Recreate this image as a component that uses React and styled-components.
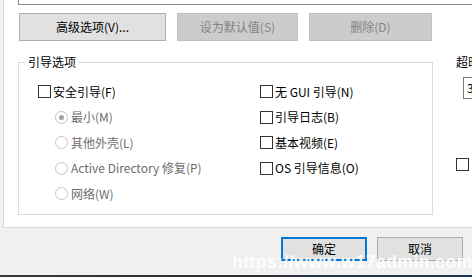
import React from "react";
import styled, { createGlobalStyle } from "styled-components";

const GlobalStyle = createGlobalStyle`
  html, body {
    margin: 0;
    padding: 0;
    background: #f0f0f0;
  }
  body {
    font-family: "Noto Sans CJK SC", "Noto Sans", sans-serif;
    font-size: 12px;
    color: #000;
  }
`;

const Window = styled.div`
  position: relative;
  width: 472px;
  height: 277px;
  overflow: hidden;
  display: flex;
  flex-direction: column;
  align-items: flex-start;
  background: #f0f0f0;
`;

const TabPage = styled.div`
  width: 640px;
  height: 227px;
  margin-left: 3px;
  padding-left: 14px;
  background: #fff;
  border-left: 1px solid #d9d9d9;
  border-bottom: 1px solid #d9d9d9;
  display: flex;
  flex-direction: column;
  flex-shrink: 0;
`;

const ListBox = styled.div`
  width: 620px;
  height: 4px;
  border: 1px solid #8c8c8c;
  border-top: none;
  flex-shrink: 0;
`;

const ButtonRow = styled.div`
  display: flex;
  margin: 8px 0 0 1px;
  gap: 11px;
`;

const Button = styled.div`
  box-sizing: border-box;
  width: ${(p) => p.$w}px;
  height: ${(p) => p.$h || 28}px;
  flex-shrink: 0;
  display: flex;
  align-items: center;
  justify-content: center;
  background: ${(p) => (p.$disabled ? "#cccccc" : "#e1e1e1")};
  border: ${(p) =>
    p.$default
      ? "2px solid #0078d7"
      : p.$disabled
      ? "1px solid #bfbfbf"
      : "1px solid #adadad"};
  color: ${(p) => (p.$disabled ? "#838383" : "#000")};
  line-height: 16px;
  white-space: nowrap;
`;

const Body = styled.div`
  display: flex;
  align-items: flex-start;
`;

const GroupBox = styled.div`
  position: relative;
  box-sizing: border-box;
  width: 415px;
  height: 153px;
  flex-shrink: 0;
  margin-top: 21px;
  border: 1px solid #dcdcdc;
  padding: 16px 0 0 19px;
  display: grid;
  grid-template-columns: 222px 1fr;
  align-items: start;
`;

const Legend = styled.span`
  position: absolute;
  top: -9px;
  left: 7px;
  padding: 0 2px;
  background: #fff;
  line-height: 16px;
`;

const Column = styled.div`
  display: flex;
  flex-direction: column;
`;

const Option = styled.div`
  height: 25.5px;
  flex-shrink: 0;
  display: flex;
  align-items: center;
  padding-left: ${(p) => (p.$indent ? 17 : 0)}px;
  color: ${(p) => (p.$disabled ? "#6d6d6d" : "#000")};
  white-space: nowrap;
  line-height: 16px;
`;

const Box = styled.span`
  box-sizing: border-box;
  width: 13px;
  height: 13px;
  margin-right: 2px;
  flex-shrink: 0;
  border: 1px solid #333;
  background: #fff;
`;

const Radio = styled.span`
  box-sizing: border-box;
  width: 13px;
  height: 13px;
  margin-right: 3px;
  flex-shrink: 0;
  border-radius: 50%;
  border: 1px solid #c4c4c4;
  background: #fff;
  display: flex;
  align-items: center;
  justify-content: center;

  &::after {
    content: "";
    width: 5px;
    height: 5px;
    border-radius: 50%;
    background: ${(p) => (p.$checked ? "#a3a3a3" : "transparent")};
  }
`;

const Side = styled.div`
  margin-left: 23px;
  flex-shrink: 0;
  display: flex;
  flex-direction: column;
  align-items: flex-start;
`;

const SideLabel = styled.div`
  margin-top: 13px;
  line-height: 16px;
  white-space: nowrap;
`;

const Field = styled.div`
  box-sizing: border-box;
  width: 60px;
  height: 22px;
  margin: 7px 0 0 7px;
  padding-left: 3px;
  border: 1px solid #7a7a7a;
  line-height: 20px;
`;

const SideBox = styled(Box)`
  margin-top: 59px;
`;

const Footer = styled.div`
  flex: 1;
  display: flex;
  gap: 10px;
  padding: 9px 0 0 281px;
`;

const TaskStrip = styled.div`
  width: 100%;
  height: 2px;
  flex-shrink: 0;
  background: linear-gradient(90deg, #3a3a3a 0%, #2d2d2d 40%, #1e3550 100%);
`;

const Watermark = styled.div`
  position: absolute;
  left: 232px;
  top: 252px;
  font-family: "Liberation Sans", Arial, sans-serif;
  font-weight: bold;
  font-size: 17.5px;
  letter-spacing: 0.5px;
  color: rgba(255, 255, 255, 0.92);
  white-space: nowrap;
  pointer-events: none;
`;

const leftOptions = [
  { label: "最小(M)", checked: true },
  { label: "其他外壳(L)" },
  { label: "Active Directory 修复(P)" },
  { label: "网络(W)" },
];

const rightOptions = ["无 GUI 引导(N)", "引导日志(B)", "基本视频(E)", "OS 引导信息(O)"];

export default function App() {
  return (
    <>
      <GlobalStyle />
      <Window>
        <TabPage>
          <ListBox />
          <ButtonRow>
            <Button $w={147}>高级选项(V)...</Button>
            <Button $w={121} $disabled>
              设为默认值(S)
            </Button>
            <Button $w={123} $disabled>
              删除(D)
            </Button>
          </ButtonRow>
          <Body>
            <GroupBox>
              <Legend>引导选项</Legend>
              <Column>
                <Option>
                  <Box />
                  安全引导(F)
                </Option>
                {leftOptions.map((o) => (
                  <Option key={o.label} $indent $disabled>
                    <Radio $checked={o.checked} />
                    {o.label}
                  </Option>
                ))}
              </Column>
              <Column>
                {rightOptions.map((label) => (
                  <Option key={label}>
                    <Box />
                    {label}
                  </Option>
                ))}
              </Column>
            </GroupBox>
            <Side>
              <SideLabel>超时(T):</SideLabel>
              <Field>30</Field>
              <SideBox />
            </Side>
          </Body>
        </TabPage>
        <Footer>
          <Button $w={86} $h={24} $default>
            确定
          </Button>
          <Button $w={86} $h={24}>
            取消
          </Button>
          <Button $w={86} $h={24}>
            应用(A)
          </Button>
        </Footer>
        <TaskStrip />
        <Watermark>https://www.w17admin.com</Watermark>
      </Window>
    </>
  );
}
